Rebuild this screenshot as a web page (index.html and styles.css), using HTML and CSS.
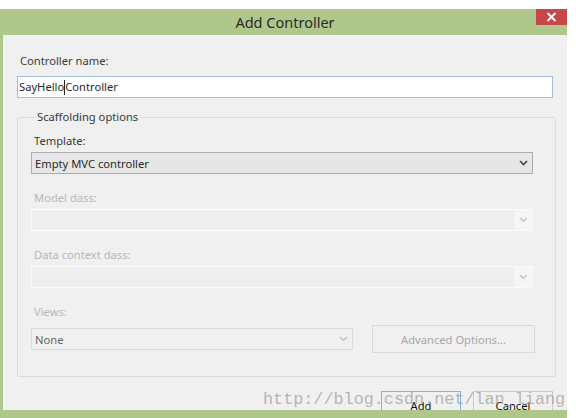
FILE: index.html
```html
<!DOCTYPE html>
<html>
<head>
<meta charset="utf-8">
<link rel="stylesheet" href="styles.css">
</head>
<body>
<div class="dialog">
  <div class="titlebar">
    <span></span>
    <span class="title">Add Controller</span>
    <span class="close-wrap"><span class="close"><svg width="11" height="10" viewBox="0 0 11 10"><path d="M1.5 1 L9.5 9 M9.5 1 L1.5 9" stroke="#fff" stroke-width="1.8" fill="none"/></svg></span></span>
  </div>
  <div class="content">
    <div class="label">Controller name:</div>
    <div class="textbox">SayHello<span class="caret"></span>Controller</div>
    <fieldset class="group">
      <legend>Scaffolding options</legend>
      <div class="label">Template:</div>
      <div class="select enabled"><span class="val">Empty MVC controller</span><span class="chev"><svg width="9" height="6" viewBox="0 0 9 6"><path d="M1 1 L4.5 4.5 L8 1" stroke="#444" stroke-width="1.6" fill="none"/></svg></span></div>
      <div class="label dis">Model dass:</div>
      <div class="select disabled"><span class="val"></span><span class="chev"><svg width="9" height="6" viewBox="0 0 9 6"><path d="M1 1 L4.5 4.5 L8 1" stroke="#bbb" stroke-width="1.1" fill="none"/></svg></span></div>
      <div class="label dis">Data context dass:</div>
      <div class="select disabled"><span class="val"></span><span class="chev"><svg width="9" height="6" viewBox="0 0 9 6"><path d="M1 1 L4.5 4.5 L8 1" stroke="#bbb" stroke-width="1.1" fill="none"/></svg></span></div>
      <div class="label dis">Views:</div>
      <div class="views-row">
        <div class="select views"><span class="val">None</span><span class="chev"><svg width="9" height="6" viewBox="0 0 9 6"><path d="M1 1 L4.5 4.5 L8 1" stroke="#bbb" stroke-width="1.1" fill="none"/></svg></span></div>
        <div class="adv">Advanced Options...</div>
      </div>
    </fieldset>
    <div class="buttons">
      <div class="btn primary">Add</div>
      <div class="btn">Cancel</div>
    </div>
  </div>
  <div class="bottom-bar"></div>
  <div class="watermark">http://blog.csdn.net/lan_liang</div>
</div>
</body>
</html>
```

FILE: styles.css
```css
html, body {
  margin: 0;
  padding: 0;
  background: #ffffff;
  width: 576px;
  height: 418px;
  overflow: hidden;
}
body {
  font-family: "Noto Sans", "Open Sans", "DejaVu Sans", sans-serif;
  font-size: 11.2px;
  color: #222;
}
.dialog {
  position: relative;
  margin-top: 9px;
  width: 564px;
  height: 409px;
  border-left: 3px solid #afc78b;
  background: #f0f0f0;
  display: flex;
  flex-direction: column;
}
.titlebar {
  height: 26px;
  background: #afc78b;
  display: grid;
  grid-template-columns: 1fr auto 1fr;
  align-items: center;
}
.title {
  font-size: 14.5px;
  color: #2b2b2b;
}
.close-wrap {
  align-self: start;
  justify-self: end;
}
.close {
  width: 31px;
  height: 16px;
  background: #c7484b;
  display: flex;
  align-items: center;
  justify-content: center;
}
.content {
  flex: 1;
  padding: 18px 13px 0 14px;
  display: flex;
  flex-direction: column;
}
.label {
  height: 16px;
  line-height: 16px;
  padding-left: 3px;
  color: #3a3a3a;
}
.label.dis {
  color: #b8b8b8;
}
.textbox {
  margin-top: 7px;
  height: 20px;
  width: 533px;
  border: 1px solid #9fc0e3;
  background: #fff;
  line-height: 20px;
  padding-left: 1px;
  box-sizing: content-box;
  color: #2a2a2a;
  display: flex;
  align-items: center;
}
.caret {
  display: inline-block;
  width: 1px;
  height: 15px;
  background: #222;
}
.group {
  margin: 11px 0 0 0;
  width: 536px;
  box-sizing: border-box;
  height: 268px;
  border: 1px solid #dcdcdc;
  border-radius: 2px;
  padding: 8px 22px 0 13px;
}
.group legend {
  padding: 0 2px;
  margin-left: 4px;
  color: #3a3a3a;
  line-height: 16px;
}
.group .label {
  margin-top: 16px;
}
.group .label:first-of-type {
  margin-top: 0;
}
.select {
  margin-top: 3px;
  height: 22px;
  box-sizing: border-box;
  display: flex;
  align-items: center;
}
.select .val {
  flex: 1;
  padding-left: 3px;
}
.select .chev {
  width: 18px;
  height: 100%;
  display: flex;
  align-items: center;
  justify-content: center;
}
.select.enabled {
  background: #e6e6e6;
  border: 1px solid #adadad;
  color: #2a2a2a;
}
.select.disabled {
  background: #eeeeee;
  border: 1px solid #fafafa;
}
.select.disabled .chev {
  background: #f6f6f6;
}
.views-row {
  margin-top: 5px;
  margin-right: -2px;
  display: flex;
  align-items: center;
  gap: 19px;
}
.select.views {
  margin-top: 0;
  width: 322px;
  background: #f0f0f0;
  border: 1px solid #dadada;
  color: #666;
}
.adv {
  width: 163px;
  height: 28px;
  box-sizing: border-box;
  border: 1px solid #dadada;
  display: flex;
  align-items: center;
  justify-content: center;
  color: #a8a8a8;
}
.buttons {
  margin-top: 14px;
  display: flex;
  justify-content: flex-end;
  gap: 12px;
  padding-right: 1px;
}
.btn {
  width: 80px;
  height: 26px;
  box-sizing: border-box;
  border: 1px solid #c9c9c9;
  background: #f0f0f0;
  display: flex;
  justify-content: center;
  padding-top: 6px;
  color: #111;
}
.btn.primary {
  border-color: #7fb2e6;
}
.bottom-bar {
  position: absolute;
  left: -3px;
  right: 0;
  top: 401px;
  height: 10px;
  background: #afc78b;
  z-index: 1;
}
.watermark {
  position: absolute;
  left: 260px;
  top: 381px;
  font-family: "Liberation Mono", "DejaVu Sans Mono", monospace;
  font-size: 16.8px;
  color: rgba(160, 160, 160, 0.75);
  z-index: 2;
  white-space: nowrap;
}
```
